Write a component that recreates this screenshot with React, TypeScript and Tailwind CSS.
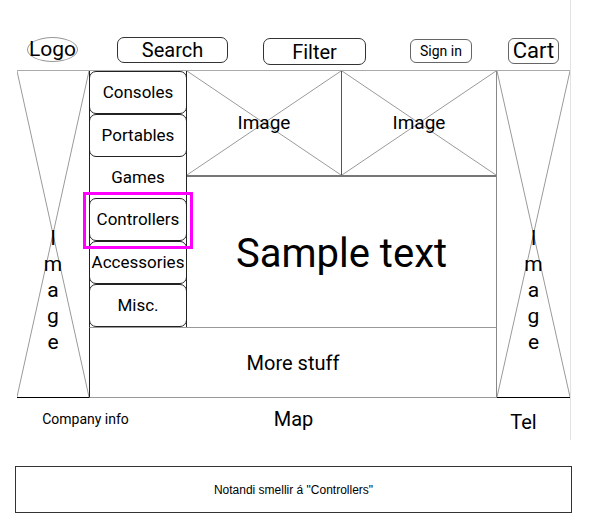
import React from 'react';

const Cross: React.FC<{ color?: string }> = ({ color = '#9a9a9a' }) => (
  <svg
    className="absolute inset-0 w-full h-full pointer-events-none"
    viewBox="0 0 100 100"
    preserveAspectRatio="none"
  >
    <line x1="0" y1="0" x2="100" y2="100" stroke={color} strokeWidth="1" vectorEffect="non-scaling-stroke" />
    <line x1="100" y1="0" x2="0" y2="100" stroke={color} strokeWidth="1" vectorEffect="non-scaling-stroke" />
  </svg>
);

const SideImage: React.FC = () => (
  <div className="relative h-full border-b border-black">
    <Cross />
    <div className="relative flex flex-col items-center pt-[154px] text-[21px] leading-[26px]">
      {['I', 'm', 'a', 'g', 'e'].map((c, i) => (
        <span key={i}>{c}</span>
      ))}
    </div>
  </div>
);

const navItems = ['Consoles', 'Portables', 'Games', 'Controllers', 'Accessories', 'Misc.'];

const App: React.FC = () => {
  return (
    <div className="relative w-[590px] h-[532px] bg-white text-black font-['Roboto',sans-serif] overflow-hidden">
      <div className="ml-[17px] w-[554px] border-r border-[#e2e2e2]">
        {/* header */}
        <div className="flex items-start h-[71px] pt-[37px] border-b border-[#aaa]">
          <div className="ml-[10px] w-[51px] h-[25px] rounded-[50%] border border-[#999] flex items-center justify-center text-[21px] leading-none">
            Logo
          </div>
          <div className="ml-[39px] w-[111px] h-[26px] rounded-[7px] border border-[#333] flex items-center justify-center text-[20px] leading-none">
            Search
          </div>
          <div className="ml-[35px] mt-[1px] w-[103px] h-[27px] rounded-[7px] border border-[#333] flex items-center justify-center text-[20px] leading-none">
            Filter
          </div>
          <div className="ml-[44px] mt-[2px] w-[62px] h-[24px] rounded-[6px] border border-[#666] flex items-center justify-center text-[14px] leading-none">
            Sign in
          </div>
          <div className="ml-[36px] mt-[1px] w-[51px] h-[26px] rounded-[6px] border border-[#666] flex items-center justify-center text-[22px] leading-none">
            Cart
          </div>
        </div>

        {/* main */}
        <div className="flex h-[327px]">
          <div className="w-[72px]">
            <SideImage />
          </div>

          <div className="w-[408px] flex flex-col">
            <div className="flex h-[256px]">
              <div className="w-[98px] flex flex-col border-x border-[#222]">
                {navItems.map((item) => (
                  <div
                    key={item}
                    className={`flex-1 flex items-center justify-center text-[17px] -mx-px ${
                      item === 'Games' ? '' : 'border border-[#222] rounded-[7px]'
                    }`}
                  >
                    {item}
                  </div>
                ))}
              </div>
              <div className="w-[310px] flex flex-col border-r border-[#888]">
                <div className="flex h-[106px] border-b-2 border-[#777]">
                  <div className="relative w-[155px] border-r border-[#555] flex items-center justify-center">
                    <Cross />
                    <span className="relative text-[19px]">Image</span>
                  </div>
                  <div className="relative flex-1 flex items-center justify-center">
                    <Cross />
                    <span className="relative text-[19px]">Image</span>
                  </div>
                </div>
                <div className="flex-1 flex items-center justify-center text-[40px] pt-[3px]">
                  Sample text
                </div>
              </div>
            </div>
            <div className="flex-1 flex items-center justify-center text-[20px] border-t border-[#999] border-l border-l-[#222] border-r border-r-[#888] border-b border-b-[#999]">
              More stuff
            </div>
          </div>

          <div className="w-[73px]">
            <SideImage />
          </div>
        </div>

        {/* footer */}
        <div className="flex h-[42px] items-center">
          <div className="w-[137px] text-center text-[14px]">Company info</div>
          <div className="w-[279px] text-center text-[20px]">Map</div>
          <div className="ml-[64px] w-[53px] text-center text-[20px] pt-[6px]">Tel</div>
        </div>
      </div>

      {/* note */}
      <div className="mt-[26px] ml-[15px] w-[557px] h-[47px] border border-[#333] flex items-center justify-center font-['Liberation_Sans',Arial,sans-serif] text-[12px]">
        Notandi smellir á "Controllers"
      </div>

      {/* highlight */}
      <div className="absolute left-[83px] top-[192px] w-[110px] h-[57px] border-[3px] border-[#ff00ff]" />
    </div>
  );
};

export default App;
